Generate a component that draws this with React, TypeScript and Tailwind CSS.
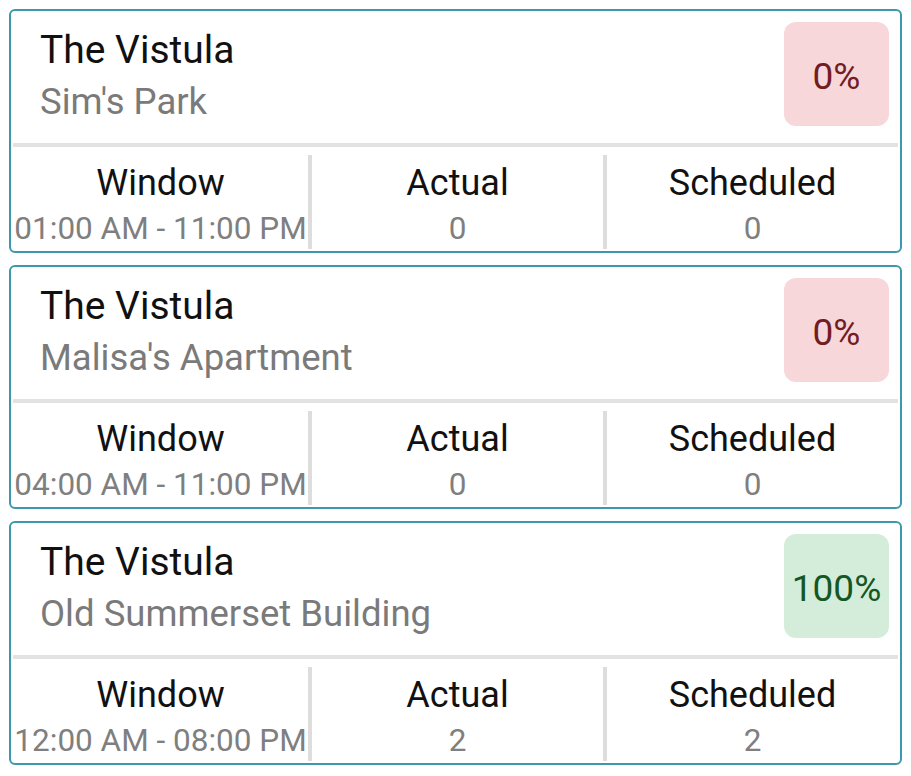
import React from "react";

type Item = {
  site: string;
  place: string;
  pct: string;
  good: boolean;
  window: string;
  actual: string;
  scheduled: string;
};

const items: Item[] = [
  { site: "The Vistula", place: "Sim's Park", pct: "0%", good: false, window: "01:00 AM - 11:00 PM", actual: "0", scheduled: "0" },
  { site: "The Vistula", place: "Malisa's Apartment", pct: "0%", good: false, window: "04:00 AM - 11:00 PM", actual: "0", scheduled: "0" },
  { site: "The Vistula", place: "Old Summerset Building", pct: "100%", good: true, window: "12:00 AM - 08:00 PM", actual: "2", scheduled: "2" },
];

function Stat({ label, value, first }: { label: string; value: string; first?: boolean }) {
  return (
    <div className={`flex flex-col items-center pt-[2px] ${first ? "" : "border-l-4 border-[#dddddd]"}`}>
      <div className="text-[36px] leading-[52px] text-[#111111] whitespace-nowrap">{value === "" ? "" : label}</div>
      <div className="text-[31.5px] leading-[40px] text-[#7f7f7f] whitespace-nowrap">{value}</div>
    </div>
  );
}

function Card({ it }: { it: Item }) {
  return (
    <div className="h-[244px] border-2 border-[#3f97ad] rounded-[6px] flex flex-col bg-white">
      <div className="h-[132px] flex justify-between items-start pl-[29px] pr-[11px]">
        <div className="pt-[13px]">
          <div className="text-[39px] leading-[52px] text-[#111111]">{it.site}</div>
          <div className="text-[36.5px] leading-[52px] text-[#7a7a7a]">{it.place}</div>
        </div>
        <div
          className={`mt-[11px] w-[105px] h-[104px] rounded-[12px] flex items-center justify-center text-[37px] pt-[5px] ${
            it.good ? "bg-[#d4edda] text-[#155724]" : "bg-[#f8d7da] text-[#721c24]"
          }`}
        >
          {it.pct}
        </div>
      </div>
      <div className="mx-[2px] h-[4px] bg-[#e2e2e2]" />
      <div className="mx-[2px] mt-[8px] grid grid-cols-3">
        <Stat label="Window" value={it.window} first />
        <Stat label="Actual" value={it.actual} />
        <Stat label="Scheduled" value={it.scheduled} />
      </div>
    </div>
  );
}

export default function App() {
  return (
    <div className="min-h-[776px] bg-white px-[9px] pt-[9px] flex flex-col gap-[12px]" style={{ fontFamily: "Roboto, 'Noto Sans', sans-serif" }}>
      {items.map((it, i) => (
        <Card key={i} it={it} />
      ))}
    </div>
  );
}
